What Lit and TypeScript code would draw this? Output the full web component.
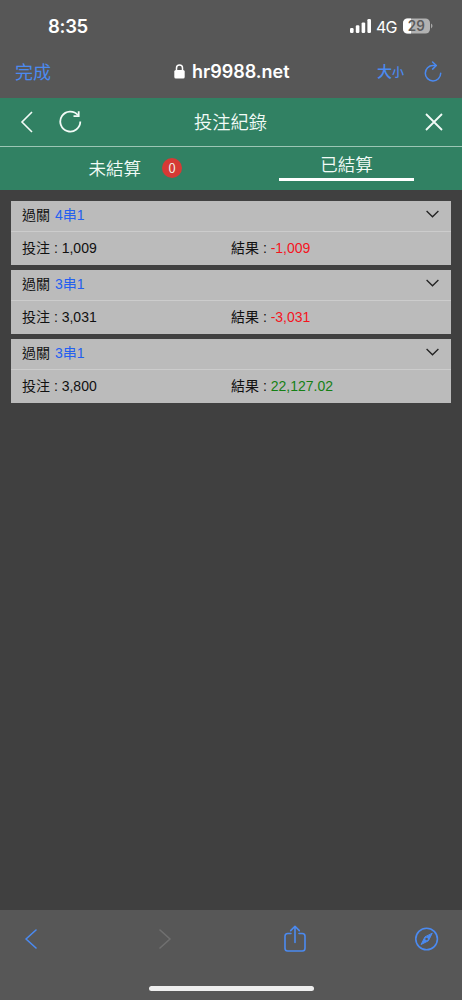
import { LitElement, html, css, svg } from 'lit';
import { customElement, property } from 'lit/decorators.js';

interface Bet {
  combo: string;
  stake: string;
  result: string;
  win: boolean;
}

const BETS: Bet[] = [
  { combo: '4串1', stake: '1,009', result: '-1,009', win: false },
  { combo: '3串1', stake: '3,031', result: '-3,031', win: false },
  { combo: '3串1', stake: '3,800', result: '22,127.02', win: true },
];

@customElement('status-bar')
class StatusBar extends LitElement {
  static styles = css`
    :host {
      display: flex;
      align-items: center;
      height: 52px;
      padding: 0 29px 0 48px;
      color: #fff;
      font-family: Inter, sans-serif;
    }
    .time {
      flex: 1;
      font-size: 18.5px;
      font-weight: 600;
      letter-spacing: -0.3px;
      line-height: 52px;
    }
    .net {
      font-size: 16px;
      width: 27px;
      letter-spacing: -0.8px;
      margin-top: 1px;
    }
    svg { display: block; }
    .signal { margin-right: 5px; }
    .battery {
      font-size: 14px;
      font-weight: 600;
      fill: #5c5c5c;
    }
  `;
  render() {
    return html`
      <span class="time">8:35</span>
      <svg class="signal" width="21" height="14" viewBox="0 0 21 14" fill="#fff">
        <rect x="0" y="9" width="3.6" height="5" rx="1.2" />
        <rect x="5.800" y="6.300" width="3.600" height="7.700" rx="1.200" />
        <rect x="11.600" y="3.400" width="3.600" height="10.600" rx="1.200" />
        <rect x="17.400" y="0" width="3.600" height="14" rx="1.200" />
      </svg>
      <span class="net">4G</span>
      <svg width="30" height="16" viewBox="0 0 30 16">
        <rect x="0" y="0.500" width="27" height="15" rx="4.500" fill="#b2b2b2" />
        <path d="M8 .500H4.500A4.500 4.500 0 0 0 0 5v6a4.500 4.500 0 0 0 4.500 4.500H8z" fill="#fff" />
        <path d="M28 5.600q1.500 1 1.500 2.400t-1.500 2.400z" fill="#a9a9a9" />
        <text class="battery" x="13.300" y="13.100" text-anchor="middle" textLength="17" lengthAdjust="spacingAndGlyphs">29</text>
      </svg>
    `;
  }
}

@customElement('address-bar')
class AddressBar extends LitElement {
  static styles = css`
    :host {
      display: grid;
      grid-template-columns: 174px 1fr auto;
      align-items: center;
      height: 46px;
      padding: 0 20px 0 0;
      box-sizing: border-box;
      color: #4b8af0;
      font-family: Inter, 'Noto Sans CJK TC', sans-serif;
    }
    .done { padding-left: 15px; font-size: 18px; line-height: 40px; margin-top: -4px; }
    .site {
      display: flex;
      align-items: center;
      gap: 7px;
      color: #fff;
      font-size: 18px;
      font-weight: 600;
      line-height: 40px;
      margin-top: -6px;
    }
    .site svg { margin-top: -2px; }
    .tools { display: flex; align-items: center; margin-top: -6px; }
    .tools svg { margin-top: -2px; }
    .size {
      display: flex;
      align-items: baseline;
      font-size: 15px;
      font-weight: 500;
      line-height: 40px;
      margin-right: 20px;
    }
    .small { font-size: 12px; }
    svg { display: block; }
  `;
  render() {
    return html`
      <span class="done">完成</span>
      <div class="site">
        <svg width="11" height="15" viewBox="0 0 11 15">
          <rect x="0.300" y="6" width="10.400" height="8.600" rx="1.600" fill="#fff" />
          <path d="M2.500 6.500V4a3 3 0 0 1 6 0v2.500" fill="none" stroke="#fff" stroke-width="1.500" />
        </svg>
        <span>hr9988.net</span>
      </div>
      <div class="tools">
        <span class="size">大<span class="small">小</span></span>
        <svg width="18" height="21" viewBox="0 0 18 21" fill="none" stroke="#4b8af0" stroke-width="1.500" stroke-linecap="round" stroke-linejoin="round">
          <path d="M16.700 12.300A7.700 7.700 0 1 1 9 4.500h3" />
          <path d="M8.600 1l3.700 3.500-3.700 3.600" />
        </svg>
      </div>
    `;
  }
}

@customElement('record-header')
class RecordHeader extends LitElement {
  static styles = css`
    :host {
      display: block;
      height: 92px;
      background: #318163;
      color: #f2fbf7;
      font-family: 'Noto Sans CJK TC', sans-serif;
      font-weight: 350;
    }
    .bar {
      display: grid;
      grid-template-columns: 1fr auto 1fr;
      align-items: center;
      height: 48px;
      padding: 0 19px 0 20px;
      border-bottom: 1px solid #9cc6b5;
      box-sizing: content-box;
    }
    .left { display: flex; align-items: center; gap: 25px; margin-top: -1px; }
    .close { justify-self: end; margin-top: -1px; }
    svg { display: block; }
    .title { font-size: 18.300px; line-height: 46px; margin: -3px 2px 0 0; }
    .tabs { display: grid; grid-template-columns: 1fr 1fr; height: 43px; }
    .tab {
      display: flex;
      font-size: 17.500px;
      line-height: 26px;
    }
    .pending { padding: 7px 0 0 88.500px; gap: 21px; }
    .badge {
      width: 20px;
      height: 20px;
      margin-top: 4px;
      border-radius: 50%;
      background: #d63a35;
      font-size: 13px;
      line-height: 19px;
      text-align: center;
    }
    .label { margin-top: 1px; }
    .settled { flex-direction: column; align-items: center; padding-top: 4px; }
    .underline { width: 135px; height: 3px; background: #fff; margin-top: 1px; }
  `;
  render() {
    return html`
      <div class="bar">
        <div class="left">
          <svg width="14" height="22" viewBox="0 0 14 22" fill="none" stroke="#f2fbf7" stroke-width="1.600">
            <path d="M12 1L2 11l10 10" />
          </svg>
          <svg width="23" height="23" viewBox="0 0 23 23" fill="none" stroke="#f2fbf7" stroke-width="1.800">
            <path d="M21.300 11.500A10 10 0 1 1 19 5.200" />
            <path d="M19.700 1.200v4.900h-5.200" />
          </svg>
        </div>
        <span class="title">投注紀錄</span>
        <svg class="close" width="18" height="18" viewBox="0 0 18 18" stroke="#f2fbf7" stroke-width="1.800">
          <path d="M1 1l16 16M17 1L1 17" />
        </svg>
      </div>
      <div class="tabs">
        <div class="tab pending"><span class="label">未結算</span><span class="badge">0</span></div>
        <div class="tab settled"><span>已結算</span><span class="underline"></span></div>
      </div>
    `;
  }
}

@customElement('bet-card')
class BetCard extends LitElement {
  @property({ attribute: false }) bet!: Bet;

  static styles = css`
    :host {
      display: block;
      height: 64px;
      background: #bbb;
      color: #111;
      font-family: 'Liberation Sans', 'Noto Sans CJK TC', sans-serif;
      font-size: 14px;
    }
    .head, .body {
      display: flex;
      align-items: center;
      padding: 0 12px 0 11px;
      box-sizing: border-box;
      line-height: 24px;
    }
    .head { height: 31px; padding-bottom: 2px; border-bottom: 1px solid #ccc; }
    .body { height: 31px; }
    .combo { flex: 1; margin-left: 5px; color: #2460f0; }
    .stake { width: 209px; }
    .lose { color: #f5141e; }
    .win { color: #158015; }
    svg { display: block; margin-top: -2px; }
  `;
  render() {
    const b = this.bet;
    return html`
      <div class="head">
        <span>過關</span><span class="combo">${b.combo}</span>
        <svg width="13" height="8" viewBox="0 0 13 8" fill="none" stroke="#222" stroke-width="1.300">
          <path d="M.600 1l5.900 5.800L12.400 1" />
        </svg>
      </div>
      <div class="body">
        <span class="stake">投注 : ${b.stake}</span>
        <span>結果 : <span class=${b.win ? 'win' : 'lose'}>${b.result}</span></span>
      </div>
    `;
  }
}

@customElement('browser-toolbar')
class BrowserToolbar extends LitElement {
  static styles = css`
    :host {
      display: flex;
      flex-direction: column;
      align-items: center;
      height: 90px;
      background: #575757;
    }
    .icons {
      display: grid;
      grid-template-columns: 134px 126px 131px 24px;
      align-items: center;
      align-self: stretch;
      height: 58px;
      padding-left: 24px;
    }
    .home { width: 165px; height: 5px; margin-top: 18px; border-radius: 3px; background: #eee; }
    svg { display: block; }
  `;
  private icon(width: number, height: number, color: string, shape: unknown) {
    return html`<svg width=${width} height=${height} viewBox="0 0 ${width} ${height}" fill="none"
      stroke=${color} stroke-width="1.6" stroke-linecap="round" stroke-linejoin="round">${shape}</svg>`;
  }
  render() {
    const blue = '#4b8af0';
    return html`
      <div class="icons">
        ${this.icon(14, 20, blue, svg`<path d="M12 1L2 10l10 9" />`)}
        ${this.icon(14, 20, '#707070', svg`<path d="M2 1l10 9-10 9" />`)}
        ${this.icon(22, 28, blue, svg`
          <path d="M7 8.500H3.700Q1 8.500 1 11.200v12.100Q1 26 3.700 26h14.600q2.700 0 2.700-2.700V11.200q0-2.700-2.700-2.700H15" />
          <path d="M11 17.500V1.500M6.700 5.600L11 1.300l4.300 4.300" />`)}
        ${this.icon(24, 24, blue, svg`
          <circle cx="11.600" cy="12" r="10.800" />
          <path d="M17.100 6.500l-3.700 7.300-7.300 3.700 3.700-7.300z" fill="${blue}" stroke-width="1" />
          <circle cx="11.600" cy="12" r="1.300" fill="#575757" stroke="none" />`)}
      </div>
      <div class="home"></div>
    `;
  }
}

@customElement('app-root')
class AppRoot extends LitElement {
  static styles = css`
    :host {
      display: flex;
      flex-direction: column;
      height: 1000px;
      background: #575757;
    }
    .list {
      flex: 1;
      display: flex;
      flex-direction: column;
      gap: 5px;
      padding: 11px 11px 0;
      background: #404040;
    }
  `;
  render() {
    return html`
      <status-bar></status-bar>
      <address-bar></address-bar>
      <record-header></record-header>
      <main class="list">${BETS.map((b) => html`<bet-card .bet=${b}></bet-card>`)}</main>
      <browser-toolbar></browser-toolbar>
    `;
  }
}
